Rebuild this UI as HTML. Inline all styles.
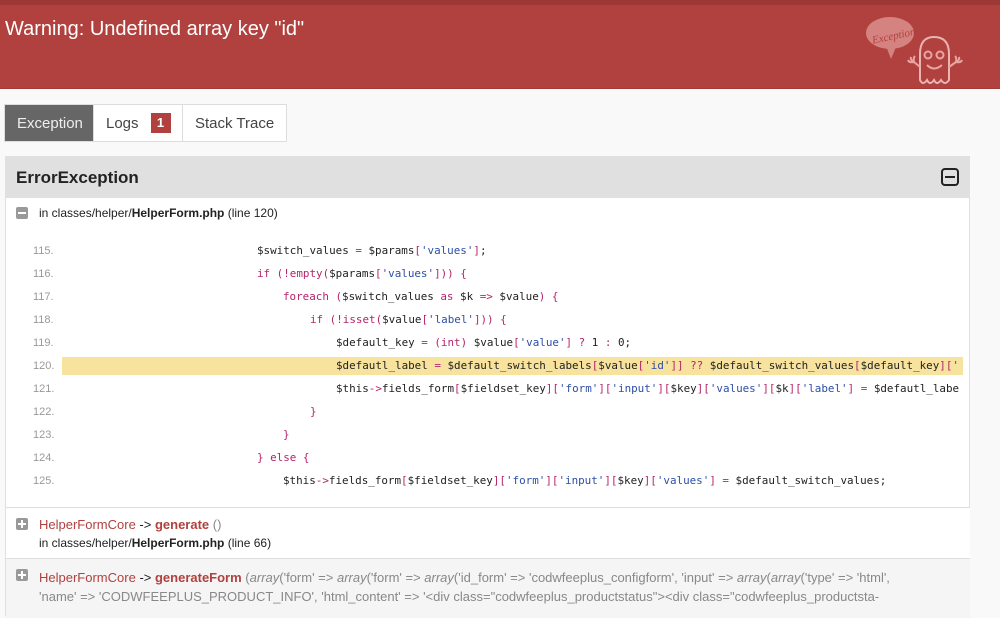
<!DOCTYPE html>
<html><head><meta charset="utf-8"><style>
*{margin:0;padding:0;box-sizing:border-box}
body{width:1000px;height:608px;overflow:hidden;background:#f9f9f9;font-family:"Liberation Sans",Arial,sans-serif;color:#222;position:relative}
.hdr{position:absolute;left:0;top:0;width:1000px;height:89px;background:#b0413e;border-top:5px solid #9c3835;border-bottom:1px solid #a53b38}
.hdr h1{position:absolute;left:5px;top:13px;font-weight:normal;font-size:20px;color:#fff}
.tabs{position:absolute;left:4px;top:104px;height:38px;display:flex;border:1px solid #ddd;background:#fff}
.tab{height:36px;line-height:38px;font-size:15px;color:#444;padding:0 12px;border-right:1px solid #ddd;white-space:nowrap}
.tab.act{background:#666;color:#eee;width:89px}
.badge{display:inline-block;background:#b0413e;color:#fff;font-weight:bold;font-size:13px;width:20px;height:20px;line-height:20px;text-align:center;margin-left:12px;vertical-align:1px}
.panel{position:absolute;left:5px;top:156px;width:965px;height:460px;background:#fff;border:1px solid #e0e0e0}
.ph{height:41px;background:#e0e0e0;position:relative}
.ph b{position:absolute;left:10px;top:11px;font-size:17px;color:#222}
.tog{position:absolute;left:935px;top:11px;width:18px;height:18px;border:2px solid #222;border-radius:4px}
.tog:after{content:"";position:absolute;left:2px;right:2px;top:6px;height:2px;background:#222}
.ico{position:absolute;width:12px;height:12px;background:#999;border-radius:2px}
.ico.m:after{content:"";position:absolute;left:2px;right:2px;top:5px;height:2px;background:#fff}
.ico.p:before{content:"";position:absolute;left:5px;top:2px;bottom:2px;width:2px;background:#fff}
.ico.p:after{content:"";position:absolute;left:2px;right:2px;top:5px;height:2px;background:#fff}
.loc{position:absolute;font-size:12px;color:#222}
.code{position:absolute;left:0;top:242px;width:963px;font-family:"DejaVu Sans Mono","Liberation Mono",monospace;font-size:10.9px}
.ln{position:absolute;left:0;height:23px;width:963px;line-height:18px}
.ln .n{position:absolute;left:33px;top:0;color:#999;font-family:"Liberation Sans",sans-serif;font-size:11px}
.ln .c{position:absolute;top:0;white-space:pre;color:#222}
.ln.hl .bg{position:absolute;left:62px;top:0;height:18px;width:901px;background:#f7e29e}
.k{color:#b5256b}.s{color:#2d4ea6}
.tr{position:absolute;left:6px;width:964px;border-top:1px solid #ddd;font-size:13px}
.cls{color:#b0413e}.fn{color:#b0413e;font-weight:bold}.arg{color:#888}
</style></head><body>
<div class="hdr"><h1>Warning: Undefined array key "id"</h1>
<svg style="position:absolute;left:862px;top:5px" width="110" height="75" viewBox="0 0 110 75" fill="none" stroke="#e8a5a2" stroke-width="2">
<ellipse cx="28" cy="23" rx="24" ry="16" fill="#d58380" stroke="none"/><path d="M24 36 L29 49 L34 37" fill="#d58380" stroke="none"/>
<text x="9" y="30" font-family="Liberation Serif" font-style="italic" font-size="11" fill="#b0413e" stroke="none" transform="rotate(-12 28 23)">Exception!</text>
<path d="M58 70 L58 44 Q58 27 72 27 Q87 27 87 44 L87 70 Q83 76 79 70 Q75 76 72 70 Q68 76 65 70 Q61 76 58 70Z" stroke="#e9b4b2"/>
<circle cx="66" cy="45" r="3.5"/><circle cx="78" cy="45" r="3.5"/><path d="M65 55 Q72 62 80 55"/>
<path d="M58 57 L52 52 M52 52 q-4 -2 -3 -5 M52 52 q-1 -4 1 -6 M52 52 q-5 1 -6 -2"/><path d="M87 57 L94 52 M94 52 q4 -2 3 -5 M94 52 q1 -4 -1 -6 M94 52 q5 1 6 -2"/>
</svg></div>
<div class="tabs"><div class="tab act">Exception</div><div class="tab" style="width:89px">Logs<span class="badge">1</span></div><div class="tab" style="border-right:0">Stack Trace</div></div>
<div class="panel"><div class="ph"><b>ErrorException</b><div class="tog"></div></div></div>
<div class="ico m" style="left:16px;top:207px"></div>
<div class="loc" style="left:39px;top:206px">in classes/helper/<b>HelperForm.php</b> (line 120)</div>
<div class="code">
<div class="ln" style="top:0"><span class="n">115.</span><span class="c" style="left:257px">$switch_values <span class="k">=</span> $params<span class="k">[</span><span class="s">'values'</span><span class="k">]</span>;</span></div>
<div class="ln" style="top:23px"><span class="n">116.</span><span class="c" style="left:257px"><span class="k">if (!empty(</span>$params<span class="k">[</span><span class="s">'values'</span><span class="k">])) {</span></span></div>
<div class="ln" style="top:46px"><span class="n">117.</span><span class="c" style="left:283px"><span class="k">foreach (</span>$switch_values <span class="k">as</span> $k <span class="k">=&gt;</span> $value<span class="k">) {</span></span></div>
<div class="ln" style="top:69px"><span class="n">118.</span><span class="c" style="left:310px"><span class="k">if (!isset(</span>$value<span class="k">[</span><span class="s">'label'</span><span class="k">])) {</span></span></div>
<div class="ln" style="top:92px"><span class="n">119.</span><span class="c" style="left:336px">$default_key <span class="k">= (int)</span> $value<span class="k">[</span><span class="s">'value'</span><span class="k">] ?</span> 1 <span class="k">:</span> 0;</span></div>
<div class="ln hl" style="top:115px;overflow:hidden"><div class="bg"></div><span class="n">120.</span><span class="c" style="left:336px">$defautl_label <span class="k">=</span> $default_switch_labels<span class="k">[</span>$value<span class="k">[</span><span class="s">'id'</span><span class="k">]] ??</span> $default_switch_values<span class="k">[</span>$default_key<span class="k">][</span><span class="s">'</span></span></div>
<div class="ln" style="top:138px;overflow:hidden"><span class="n">121.</span><span class="c" style="left:336px">$this<span class="k">-&gt;</span>fields_form<span class="k">[</span>$fieldset_key<span class="k">][</span><span class="s">'form'</span><span class="k">][</span><span class="s">'input'</span><span class="k">][</span>$key<span class="k">][</span><span class="s">'values'</span><span class="k">][</span>$k<span class="k">][</span><span class="s">'label'</span><span class="k">] =</span> $defautl_labe</span></div>
<div class="ln" style="top:161px"><span class="n">122.</span><span class="c" style="left:310px"><span class="k">}</span></span></div>
<div class="ln" style="top:184px"><span class="n">123.</span><span class="c" style="left:283px"><span class="k">}</span></span></div>
<div class="ln" style="top:207px"><span class="n">124.</span><span class="c" style="left:257px"><span class="k">} else {</span></span></div>
<div class="ln" style="top:230px"><span class="n">125.</span><span class="c" style="left:283px">$this<span class="k">-&gt;</span>fields_form<span class="k">[</span>$fieldset_key<span class="k">][</span><span class="s">'form'</span><span class="k">][</span><span class="s">'input'</span><span class="k">][</span>$key<span class="k">][</span><span class="s">'values'</span><span class="k">] =</span> $default_switch_values;</span></div>
</div>
<div class="tr" style="top:507px;height:51px;background:#fff">
<div class="ico p" style="left:10px;top:10px"></div>
<div style="position:absolute;left:33px;top:9px"><span class="cls">HelperFormCore</span> -&gt; <span class="fn">generate</span> <span class="arg">()</span></div>
<div style="position:absolute;left:33px;top:28px;font-size:12px">in classes/helper/<b>HelperForm.php</b> (line 66)</div>
</div>
<div class="tr" style="top:558px;height:60px;background:#f5f5f5">
<div class="ico p" style="left:10px;top:10px"></div>
<div style="position:absolute;left:33px;top:9px;white-space:nowrap;line-height:19px;color:#888"><span class="cls">HelperFormCore</span> <span style="color:#222">-&gt;</span> <span class="fn">generateForm</span> (<i>array</i>('form' =&gt; <i>array</i>('form' =&gt; <i>array</i>('id_form' =&gt; 'codwfeeplus_configform', 'input' =&gt; <i>array</i>(<i>array</i>('type' =&gt; 'html',<br>'name' =&gt; 'CODWFEEPLUS_PRODUCT_INFO', 'html_content' =&gt; '&lt;div class="codwfeeplus_productstatus"&gt;&lt;div class="codwfeeplus_productsta-</div>
</div>
</body></html>
